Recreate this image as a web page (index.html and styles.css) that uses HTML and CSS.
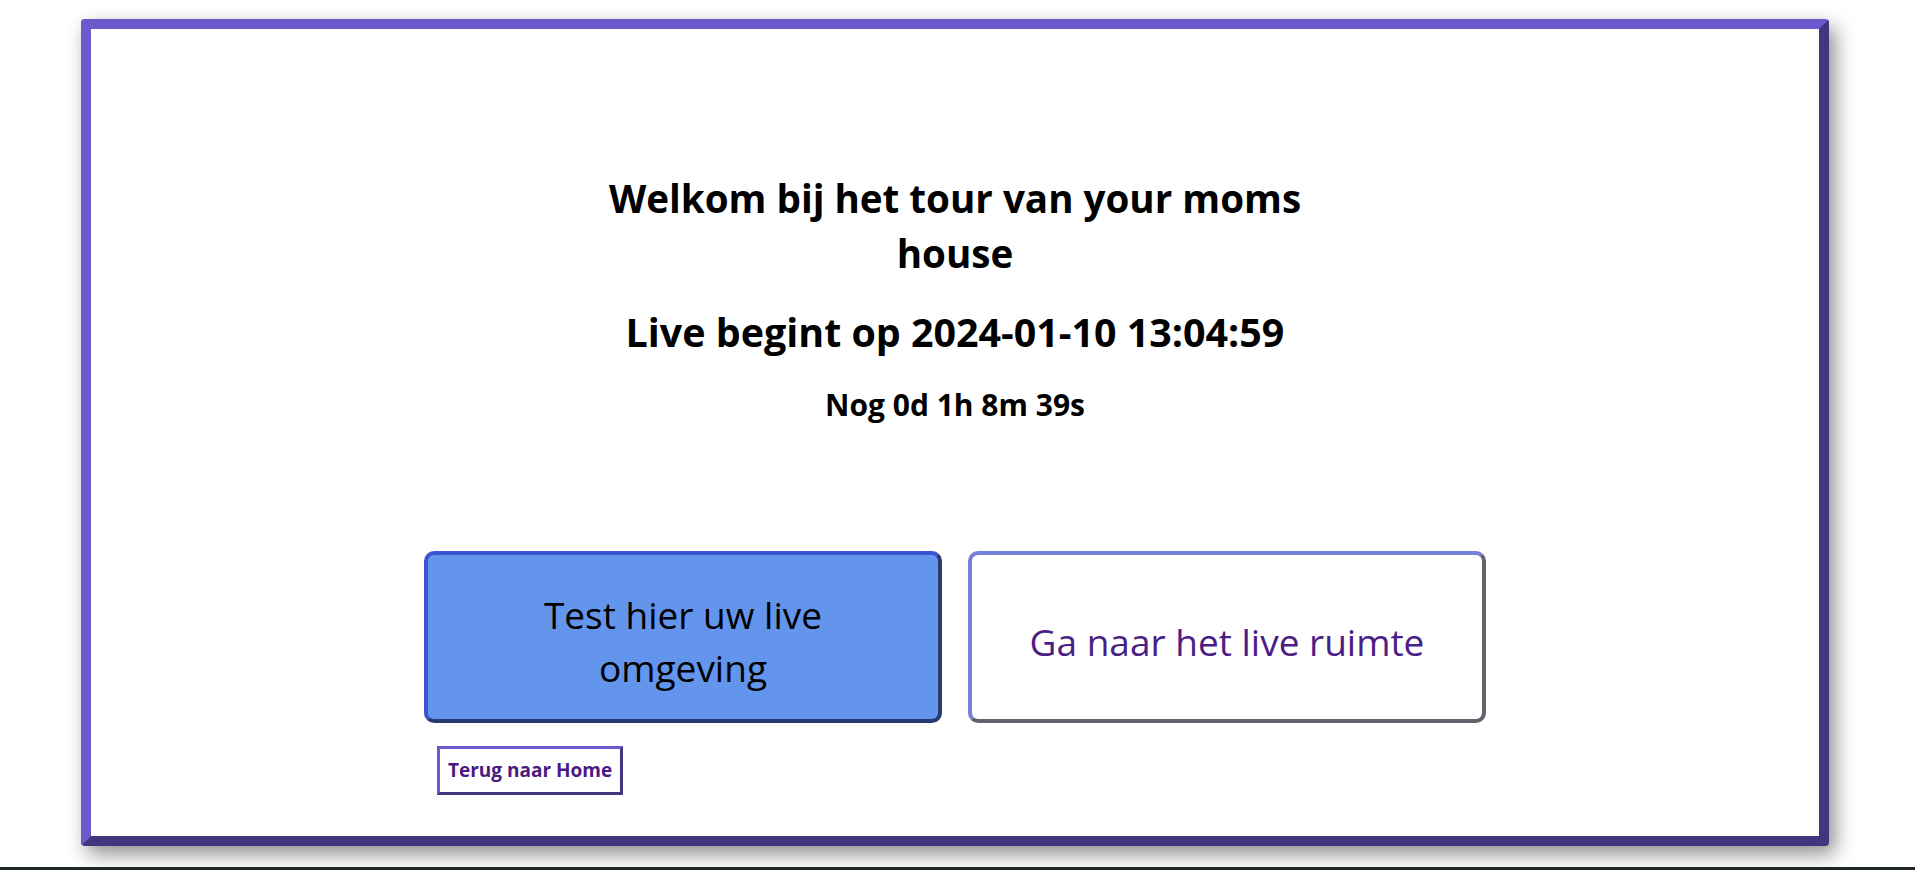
FILE: index.html
```html
<!DOCTYPE html>
<html lang="nl">
<head>
  <meta charset="UTF-8">
  <title>Live tour</title>
  <link rel="stylesheet" href="styles.css">
</head>
<body>
  <!-- Kader met welkomsttekst en knoppen -->
  <div class="frame">
    <div class="intro">
      <h1>Welkom bij het tour van your moms house</h1>
      <h1 class="start">Live begint op 2024-01-10 13:04:59</h1>
      <h2 id="countdown">Nog 0d 1h 8m 39s</h2>
    </div>

    <div class="actions">
      <div class="choices">
        <a class="choice test" href="#">Test hier uw live omgeving</a>
        <a class="choice room" href="#">Ga naar het live ruimte</a>
      </div>
      <a class="home" href="#">Terug naar Home</a>
    </div>
  </div>

  <div class="bottom-line"></div>
</body>
</html>
```

FILE: styles.css
```css
html, body {
  height: 100%;
}
body {
  margin: 0;
  background-color: #fff;
  font-family: "Open Sans", "Noto Sans", sans-serif;
  display: flex;
  flex-direction: column;
}
/* Het grote kader */
.frame {
  box-sizing: border-box;
  width: 1748px;
  height: 827px;
  margin: 19px 0 0 81px;
  padding-top: 142px;
  border: 10px solid;
  border-color: #6a5acd #41377e #41377e #6a5acd;
  border-radius: 4px;
  box-shadow: 6px 8px 20px rgba(0, 0, 0, 0.45);
  flex-shrink: 0;
}
.intro {
  width: 720px;
  margin: 0 auto;
  text-align: center;
  color: #000;
}
.intro h1 {
  margin: 0;
  font-size: 38.6px;
  line-height: 55px;
  font-weight: 700;
}
.intro .start {
  margin-top: 24px;
  font-size: 39.4px;
}
#countdown {
  margin: 24px 0 0;
  font-size: 30px;
  line-height: 42px;
  font-weight: 700;
}
/* Knoppen */
.actions {
  width: 1062px;
  margin: 125px auto 0;
}
.choices {
  display: flex;
  gap: 26px;
}
.choice {
  box-sizing: border-box;
  width: 518px;
  height: 172px;
  padding: 8px 40px 0;
  display: flex;
  align-items: center;
  justify-content: center;
  text-align: center;
  text-decoration: none;
  font-size: 37px;
  line-height: 53px;
  border: 4px solid;
  border-radius: 10px;
}
.test {
  background-color: #6495ed;
  color: #000;
  border-color: #3b55d2 #293a72 #293a72 #3b55d2;
}
.room {
  background-color: #fff;
  color: #4b1d87;
  border-color: #7580d6 #65616d #65616d #7580d6;
}
.home {
  display: inline-block;
  margin: 23px 0 0 13px;
  padding: 0 8px;
  height: 49px;
  box-sizing: border-box;
  line-height: 43px;
  border: 3px solid;
  border-color: #6a5acd #41377e #41377e #6a5acd;
  color: #4a1a82;
  font-size: 19px;
  font-weight: 700;
  text-decoration: none;
}
/* Donkere rand onderaan */
.bottom-line {
  margin-top: auto;
  height: 3px;
  background-color: #1f2724;
}
```
